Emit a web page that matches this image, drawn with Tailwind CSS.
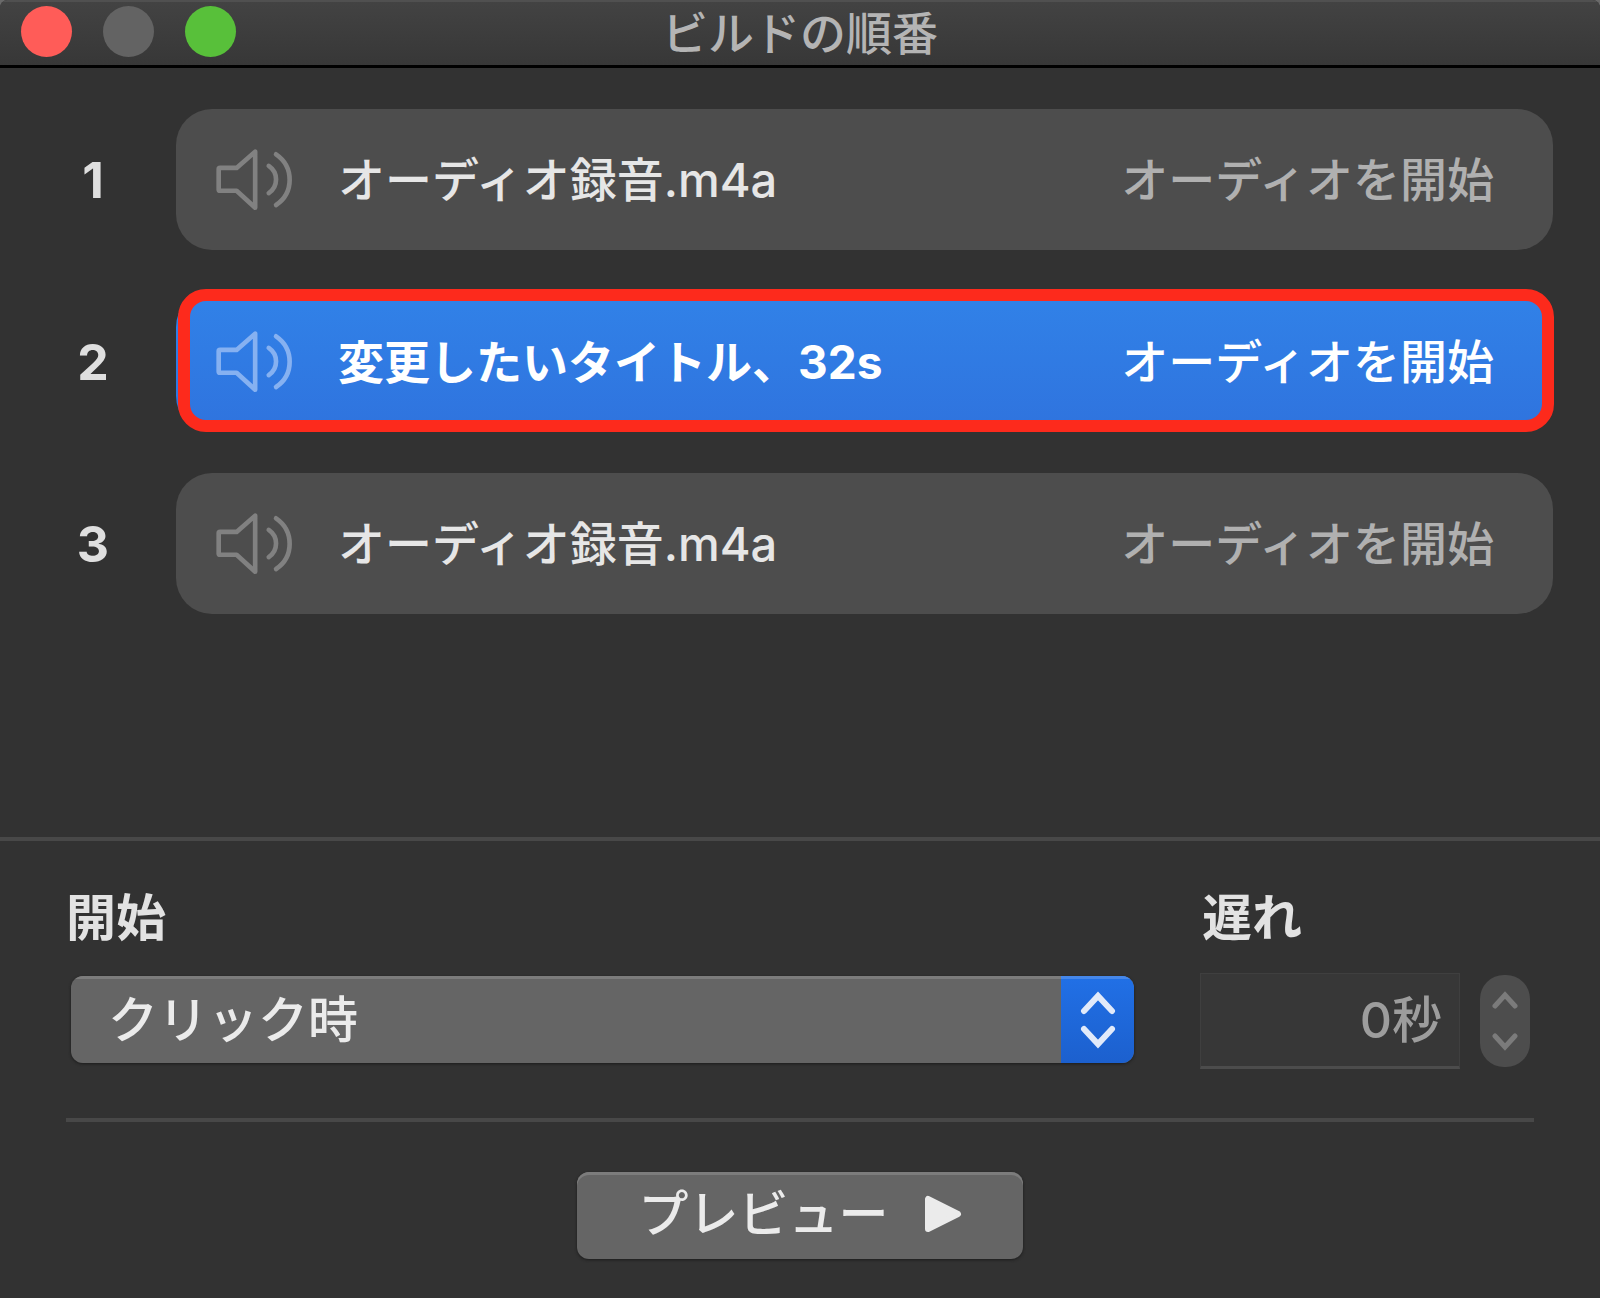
<!DOCTYPE html>
<html lang="ja">
<head>
  <meta charset="UTF-8" />
  <meta name="viewport" content="width=device-width, initial-scale=1.0" />
  <title>ビルドの順番</title>
  <script src="https://cdn.jsdelivr.net/npm/@tailwindcss/browser@4"></script>
</head>

<body class="bg-[#6a6a6a] font-['Inter','Noto_Sans_CJK_JP',sans-serif]">
  <!-- Speaker icon, shared by all rows -->
  <svg class="hidden">
    <symbol id="speaker" viewBox="45 53 235 190">
      <g fill="none" stroke="currentColor" stroke-width="14" stroke-linejoin="round" stroke-linecap="round">
        <path d="M60 113H110L166 64V233L110 182H60Q56 182 56 178V117Q56 113 60 113Z" />
        <path d="M207 107Q229 122 229 148T207 189" />
        <path d="M229 72Q270 100 270 149T229 225" />
      </g>
    </symbol>
  </svg>

  <div class="flex min-h-screen flex-col overflow-hidden rounded-t-lg bg-[#323232]">
    <!-- Title bar -->
    <header class="relative flex h-[68px] items-center justify-center border-b-3 border-black bg-linear-to-b from-[#434343] to-[#373737] shadow-[inset_0_2px_0_#505050]">
      <div class="absolute top-[6px] left-[21px] flex gap-[31px]">
        <button type="button" aria-label="閉じる" class="size-[51px] rounded-full bg-[#ff5c58]"></button>
        <button type="button" aria-label="しまう" disabled class="size-[51px] rounded-full bg-[#636363]"></button>
        <button type="button" aria-label="拡大" class="size-[51px] rounded-full bg-[#58c03a]"></button>
      </div>
      <h1 class="text-[46px] leading-[60px] font-medium text-[#b4b4b4]">ビルドの順番</h1>
    </header>

    <!-- Build list -->
    <ol class="flex flex-1 flex-col gap-[41px] pt-[41px] pr-[47px] pb-10">
      <li class="flex items-center">
        <span class="w-[176px] shrink-0 pl-2.5 text-center text-[50px] leading-[60px] font-bold text-[#dfdfdf]">1</span>
        <button type="button" class="flex h-[141px] flex-1 items-center rounded-[36px] bg-[#4d4d4d] pr-[59px] pl-[39px]">
          <svg class="h-[63px] w-[78px] text-[#818181]"><use href="#speaker" /></svg>
          <span class="ml-[45px] text-[47px] leading-[60px] font-medium text-[#e6e6e6]">オーディオ録音.m4a</span>
          <span class="ml-auto text-[47px] leading-[60px] font-medium text-[#b0b0b0]">オーディオを開始</span>
        </button>
      </li>
      <li class="flex items-center">
        <span class="w-[176px] shrink-0 pl-2.5 text-center text-[50px] leading-[60px] font-bold text-[#dfdfdf]">2</span>
        <button type="button" aria-pressed="true" class="relative flex h-[141px] flex-1 items-center rounded-[36px] bg-linear-to-b from-[#3182e8] to-[#2f73de] pr-[59px] pl-[39px]">
          <svg class="h-[63px] w-[78px] text-[#86b1f1]"><use href="#speaker" /></svg>
          <span class="ml-[45px] text-[46px] leading-[60px] font-bold text-white">変更したいタイトル、32s</span>
          <span class="ml-auto text-[47px] leading-[60px] font-medium text-white">オーディオを開始</span>
          <span class="absolute -top-0.5 -right-px bottom-0 left-0.5 rounded-[28px] border-12 border-[#fd2a1c]"></span>
        </button>
      </li>
      <li class="flex items-center">
        <span class="w-[176px] shrink-0 pl-2.5 text-center text-[50px] leading-[60px] font-bold text-[#dfdfdf]">3</span>
        <button type="button" class="flex h-[141px] flex-1 items-center rounded-[36px] bg-[#4d4d4d] pr-[59px] pl-[39px]">
          <svg class="h-[63px] w-[78px] text-[#818181]"><use href="#speaker" /></svg>
          <span class="ml-[45px] text-[47px] leading-[60px] font-medium text-[#e6e6e6]">オーディオ録音.m4a</span>
          <span class="ml-auto text-[47px] leading-[60px] font-medium text-[#b0b0b0]">オーディオを開始</span>
        </button>
      </li>
    </ol>

    <!-- Timing controls -->
    <footer class="border-t-4 border-[#484848] px-[66px] pt-[47px] pb-[39px]">
      <div class="flex gap-[66px] pr-1">
        <div class="flex-1">
          <label for="start" class="block text-[50px] leading-[60px] font-bold text-[#e2e2e2]">開始</label>
          <div class="mt-[25px] h-24 pt-[3px] pl-[5px]">
            <div class="relative h-[87px] overflow-hidden rounded-xl shadow-[0_1px_3px_#1c1c1c]">
              <select id="start" class="size-full appearance-none bg-[#656565] pl-[37px] text-[50px] leading-[80px] font-medium text-[#ebebeb] shadow-[inset_0_3px_0_#7c7c7c]">
                <option>クリック時</option>
              </select>
              <span class="pointer-events-none absolute inset-y-0 right-0 flex w-[73px] items-center justify-center bg-linear-to-b from-[#2170e6] to-[#1c60ce] shadow-[inset_0_3px_0_#4587ea]">
                <svg class="h-[58px] w-[36px]" viewBox="0 0 36 58" fill="none" stroke="#e1eafa" stroke-width="6" stroke-linecap="round" stroke-linejoin="miter">
                  <path d="M4 20L18 5L32 20M4 38L18 53L32 38" />
                </svg>
              </span>
            </div>
          </div>
        </div>
        <div>
          <label for="delay" class="block pl-0.5 text-[50px] leading-[60px] font-bold text-[#e2e2e2]">遅れ</label>
          <div class="mt-[25px] flex h-24 items-center gap-5">
            <input id="delay" type="text" value="0秒" disabled class="h-24 w-[260px] border border-b-3 border-[#3f3f3f] border-b-[#4c4c4c] bg-[#373737] pr-[17px] pb-2 text-right text-[50px] font-medium text-[#9d9d9d]" />
            <div class="flex h-[92px] w-[50px] flex-col overflow-hidden rounded-[24px] bg-[#4d4d4d]">
              <button type="button" disabled aria-label="増やす" class="flex flex-1 items-center justify-center pt-1">
                <svg class="h-[18px] w-[28px]" viewBox="0 0 28 18" fill="none" stroke="#7b7b7b" stroke-width="5" stroke-linecap="round"><path d="M4 15L14 4L24 15" /></svg>
              </button>
              <button type="button" disabled aria-label="減らす" class="flex flex-1 items-center justify-center pb-1">
                <svg class="h-[18px] w-[28px]" viewBox="0 0 28 18" fill="none" stroke="#7b7b7b" stroke-width="5" stroke-linecap="round"><path d="M4 3L14 14L24 3" /></svg>
              </button>
            </div>
          </div>
        </div>
      </div>

      <hr class="mt-[49px] border-t-4 border-[#484848]" />

      <button type="button" class="mx-auto mt-[50px] flex h-[87px] w-[446px] items-center justify-center gap-[35px] rounded-xl bg-[#656565] pb-1 text-[50px] leading-[80px] font-medium text-[#ebebeb] shadow-[inset_0_3px_0_#7c7c7c,0_1px_3px_#1c1c1c]">
        プレビュー
        <svg class="h-[38px] w-[38px]" viewBox="0 0 38 38" fill="#ebebeb" stroke="#ebebeb" stroke-width="6" stroke-linejoin="round"><path d="M4 4V34L34 19Z" /></svg>
      </button>
    </footer>
  </div>
</body>
</html>
